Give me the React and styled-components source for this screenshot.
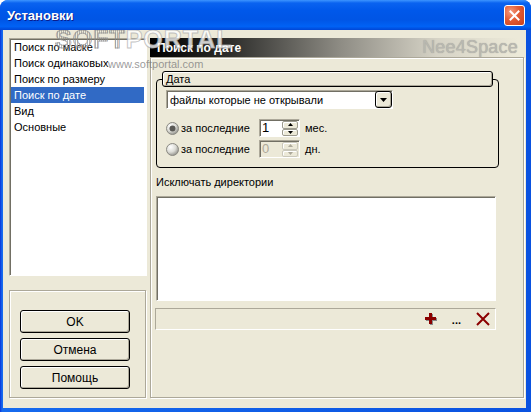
import React from 'react'
import styled, { createGlobalStyle } from 'styled-components'

const FACE = '#ECE9D8'
const SHADOW = '#ACA899'
const DARK = '#716F64'
const FONT = '"Liberation Sans", Arial, sans-serif'

const GlobalStyle = createGlobalStyle`
  html, body {
    margin: 0;
    padding: 0;
    background: #fff;
  }
  body {
    font-family: ${FONT};
    font-size: 11px;
    color: #000;
  }
`

const Window = styled.div`
  width: 531px;
  height: 412px;
  display: flex;
  flex-direction: column;
  background: linear-gradient(to right, #0831d9 0px, #166aee 2px, #0a52e0 100%);
  border-radius: 8px 8px 0 0;
  overflow: hidden;
`

const TitleBar = styled.div`
  height: 30px;
  flex: none;
  display: flex;
  align-items: center;
  justify-content: space-between;
  padding: 0 6px 0 7px;
  background: linear-gradient(
    to bottom,
    #3d95ff 0%,
    #0a63f0 10%,
    #0058ea 35%,
    #0055e5 65%,
    #0062f5 88%,
    #0046d6 100%
  );
`

const Title = styled.span`
  font-family: ${FONT};
  font-weight: 700;
  font-size: 13px;
  color: #fff;
  text-shadow: 1px 1px 0 #0a1c8c;
`

const CloseButton = styled.div`
  width: 21px;
  height: 21px;
  box-sizing: border-box;
  border: 1px solid #fff;
  border-radius: 3px;
  background: radial-gradient(circle at 30% 30%, #f59a7c 0%, #e25b34 45%, #c9401c 100%);
  display: flex;
  align-items: center;
  justify-content: center;
`

const Client = styled.div`
  flex: 1;
  margin: 0 5px 4px 3px;
  background: ${FACE};
  display: flex;
  gap: 3px;
  padding: 8px 2px 10px 6px;
  position: relative;
  overflow: hidden;
`

const LeftColumn = styled.div`
  width: 138px;
  display: flex;
  flex-direction: column;
  gap: 14px;
`

const PageList = styled.div`
  height: 238px;
  box-sizing: border-box;
  background: #fff;
  border: 1px solid;
  border-color: ${SHADOW} #fff #fff ${SHADOW};
  box-shadow: inset 1px 1px 0 ${DARK};
  padding: 0 2px 0 1px;
`

const PageItem = styled.div`
  height: 16px;
  line-height: 16px;
  padding-left: 3px;
  white-space: nowrap;
  overflow: hidden;
  background: ${(p) => (p.$selected ? '#316AC5' : 'transparent')};
  color: ${(p) => (p.$selected ? '#fff' : '#000')};
`

const Etched = styled.div`
  box-sizing: border-box;
  border: 1px solid ${SHADOW};
  box-shadow: inset 1px 1px 0 #fff, 1px 1px 0 #fff;
`

const ButtonPanel = styled(Etched)`
  width: 137px;
  height: 108px;
  display: flex;
  flex-direction: column;
  gap: 5px;
  padding: 19px 0 0 10px;
`

const PushButton = styled.div`
  width: 110px;
  height: 23px;
  box-sizing: border-box;
  border: 1px solid #000;
  border-radius: 3px;
  background: ${FACE};
  box-shadow: inset 1px 1px 0 #fff, inset -1px -1px 0 ${SHADOW};
  display: flex;
  align-items: center;
  justify-content: center;
  font-size: 12px;
`

const RightPanel = styled.div`
  width: 374px;
  display: flex;
  flex-direction: column;
`

const Header = styled.div`
  height: 19px;
  flex: none;
  margin-right: 6px;
  display: flex;
  align-items: center;
  justify-content: space-between;
  padding-left: 7px;
  background: linear-gradient(to right, #000 0%, #2e2e2c 22%, #8f8d85 52%, #d6d3c6 78%, ${FACE} 100%);
`

const HeaderTitle = styled.span`
  font-weight: 700;
  font-size: 12px;
  color: #fff;
`

const Brand = styled.span`
  font-size: 18px;
  color: #b9b8b1;
  text-shadow: 0 0 1px #9e9d95;
  letter-spacing: 0.2px;
`

const PageFrame = styled(Etched)`
  flex: 1;
  display: flex;
  flex-direction: column;
  align-items: flex-start;
  padding-left: 5px;
`

const GroupBox = styled.div`
  position: relative;
  align-self: stretch;
  margin: 21px 24px 0 0;
  border: 1px solid #000;
  border-radius: 4px;
  padding: 10px 0 9px 9px;
  display: flex;
  flex-direction: column;
  gap: 3px;
`

const GroupLabel = styled.div`
  position: absolute;
  top: -9px;
  left: 5px;
  right: 5px;
  height: 16px;
  box-sizing: border-box;
  background: ${FACE};
  border: 1px solid #000;
  border-radius: 3px;
  box-shadow: inset 1px 1px 0 #fff, inset -1px -1px 0 ${SHADOW};
  padding-left: 3px;
  line-height: 14px;
`

const Sunken = styled.div`
  box-sizing: border-box;
  border: 1px solid;
  border-color: ${SHADOW} #fff #fff ${SHADOW};
  box-shadow: inset 1px 1px 0 ${DARK};
`

const Combo = styled(Sunken)`
  width: 227px;
  height: 19px;
  margin-bottom: 7px;
  background: #fff;
  display: flex;
  align-items: center;
  justify-content: space-between;
  padding-left: 3px;
`

const DropButton = styled.div`
  width: 17px;
  height: 17px;
  box-sizing: border-box;
  border: 1px solid #000;
  border-radius: 3px;
  background: ${FACE};
  box-shadow: inset 1px 1px 0 #fff, inset -1px -1px 0 ${SHADOW};
  display: flex;
  align-items: center;
  justify-content: center;
`

const PeriodRow = styled.div`
  height: 18px;
  display: flex;
  align-items: center;
`

const RadioLabel = styled.label`
  width: 93px;
  display: flex;
  align-items: center;
  gap: 2px;
`

const Spin = styled(Sunken)`
  width: 41px;
  height: 18px;
  display: flex;
  background: ${(p) => (p.$disabled ? FACE : '#fff')};
`

const SpinValue = styled.span`
  flex: 1;
  padding-left: 2px;
  font-size: 13px;
  line-height: 16px;
  color: ${(p) => (p.$disabled ? '#aca899' : '#000')};
`

const SpinButtons = styled.div`
  width: 16px;
  display: flex;
  flex-direction: column;
  padding: 1px 1px 0 0;
`

const SpinHalf = styled.div`
  flex: 1;
  border: 1px solid ${(p) => (p.$disabled ? '#cac8bb' : '#9d9b8f')};
  border-radius: 2px;
  background: ${FACE};
  box-shadow: inset 1px 1px 0 #fff;
  display: flex;
  align-items: center;
  justify-content: center;
`

const Unit = styled.span`
  margin-left: 5px;
`

const SectionLabel = styled.div`
  margin-top: 8px;
  line-height: 13px;
`

const DirList = styled(Sunken)`
  margin-top: 7px;
  width: 340px;
  height: 105px;
  background: #fff;
`

const Toolbar = styled.div`
  margin: 7px 0 0 -1px;
  width: 341px;
  height: 22px;
  box-sizing: border-box;
  border: 1px solid;
  border-color: ${SHADOW} #fff #fff ${SHADOW};
  display: flex;
  align-items: center;
  justify-content: flex-end;
  gap: 15px;
  padding-right: 5px;
`

const Dots = styled.span`
  font-weight: 700;
  font-size: 11px;
  line-height: 11px;
  margin-top: 3px;
`

const Watermark = styled.div`
  position: absolute;
  top: -3px;
  left: 52px;
  font-family: ${FONT};
  font-weight: 700;
  font-size: 25px;
  line-height: 25px;
  letter-spacing: 1px;
  pointer-events: none;
  white-space: nowrap;
`

const Soft = styled.span`
  color: transparent;
  -webkit-text-stroke: 1px rgba(140, 140, 140, 0.7);
  background: repeating-linear-gradient(90deg, rgba(130, 130, 130, 0.55) 0 1px, transparent 1px 2px);
  -webkit-background-clip: text;
  background-clip: text;
`

const Portal = styled.span`
  color: rgba(255, 255, 255, 0.8);
  -webkit-text-stroke: 1px rgba(170, 170, 170, 0.7);
`

const WatermarkUrl = styled.div`
  position: absolute;
  top: 28px;
  left: 105px;
  font-size: 11px;
  color: rgba(120, 120, 120, 0.75);
  pointer-events: none;
`

const pages = ['Поиск по маске', 'Поиск одинаковых', 'Поиск по размеру', 'Поиск по дате', 'Вид', 'Основные']

const Radio = ({ checked }) => (
  <svg width="13" height="13" viewBox="0 0 13 13">
    <defs>
      <radialGradient id="rg" cx="35%" cy="30%" r="75%">
        <stop offset="0%" stopColor="#ffffff" />
        <stop offset="55%" stopColor="#dcdcd6" />
        <stop offset="100%" stopColor="#8f8e88" />
      </radialGradient>
    </defs>
    <circle cx="6.5" cy="6.5" r="6" fill="url(#rg)" stroke="#8a8982" />
    {checked && <circle cx="6.5" cy="6.5" r="3" fill="#5a5955" />}
  </svg>
)

const SpinArrow = ({ up, disabled }) => (
  <svg width="5" height="3" viewBox="0 0 5 3">
    <polygon points={up ? '2.5,0 5,3 0,3' : '0,0 5,0 2.5,3'} fill={disabled ? '#aca899' : '#000'} />
  </svg>
)

const SpinEdit = ({ value, disabled }) => (
  <Spin $disabled={disabled}>
    <SpinValue $disabled={disabled}>{value}</SpinValue>
    <SpinButtons>
      <SpinHalf $disabled={disabled}>
        <SpinArrow up disabled={disabled} />
      </SpinHalf>
      <SpinHalf $disabled={disabled}>
        <SpinArrow disabled={disabled} />
      </SpinHalf>
    </SpinButtons>
  </Spin>
)

const App = () => {
  return (
    <>
      <GlobalStyle />
      <Window>
        <TitleBar>
          <Title>Установки</Title>
          <CloseButton>
            <svg width="11" height="11" viewBox="0 0 11 11">
              <path d="M1.5 1.5 L9.5 9.5 M9.5 1.5 L1.5 9.5" stroke="#fff" strokeWidth="2" strokeLinecap="square" />
            </svg>
          </CloseButton>
        </TitleBar>

        <Client>
          <LeftColumn>
            <PageList>
              {pages.map((p) => (
                <PageItem key={p} $selected={p === 'Поиск по дате'}>
                  {p}
                </PageItem>
              ))}
            </PageList>
            <ButtonPanel>
              <PushButton>OK</PushButton>
              <PushButton>Отмена</PushButton>
              <PushButton>Помощь</PushButton>
            </ButtonPanel>
          </LeftColumn>

          <RightPanel>
            <Header>
              <HeaderTitle>Поиск по дате</HeaderTitle>
              <Brand>Nee4Space</Brand>
            </Header>
            <PageFrame>
              <GroupBox>
                <GroupLabel>Дата</GroupLabel>
                <Combo>
                  <span>файлы которые не открывали</span>
                  <DropButton>
                    <svg width="7" height="4" viewBox="0 0 7 4">
                      <polygon points="0,0 7,0 3.5,4" fill="#000" />
                    </svg>
                  </DropButton>
                </Combo>
                <PeriodRow>
                  <RadioLabel>
                    <Radio checked />
                    за последние
                  </RadioLabel>
                  <SpinEdit value="1" />
                  <Unit>мес.</Unit>
                </PeriodRow>
                <PeriodRow>
                  <RadioLabel>
                    <Radio />
                    за последние
                  </RadioLabel>
                  <SpinEdit value="0" disabled />
                  <Unit>дн.</Unit>
                </PeriodRow>
              </GroupBox>

              <SectionLabel>Исключать директории</SectionLabel>
              <DirList />
              <Toolbar>
                <svg width="12" height="12" viewBox="0 0 12 12">
                  <path d="M5 1 h3 v4 h4 v3 h-4 v4 h-3 v-4 h-4 v-3 h4 z" fill="#8a8a8a" />
                  <path d="M4 0 h3 v4 h4 v3 h-4 v4 h-3 v-4 h-4 v-3 h4 z" fill="#8b0000" />
                </svg>
                <Dots>...</Dots>
                <svg width="14" height="14" viewBox="0 0 14 14">
                  <path d="M1 1 L13 13 M13 1 L1 13" stroke="#8b0000" strokeWidth="2" />
                </svg>
              </Toolbar>
            </PageFrame>
          </RightPanel>

          <Watermark>
            <Soft>SOFT</Soft>
            <Portal>PORTAL</Portal>
          </Watermark>
          <WatermarkUrl>www.softportal.com</WatermarkUrl>
        </Client>
      </Window>
    </>
  )
}

export default App
